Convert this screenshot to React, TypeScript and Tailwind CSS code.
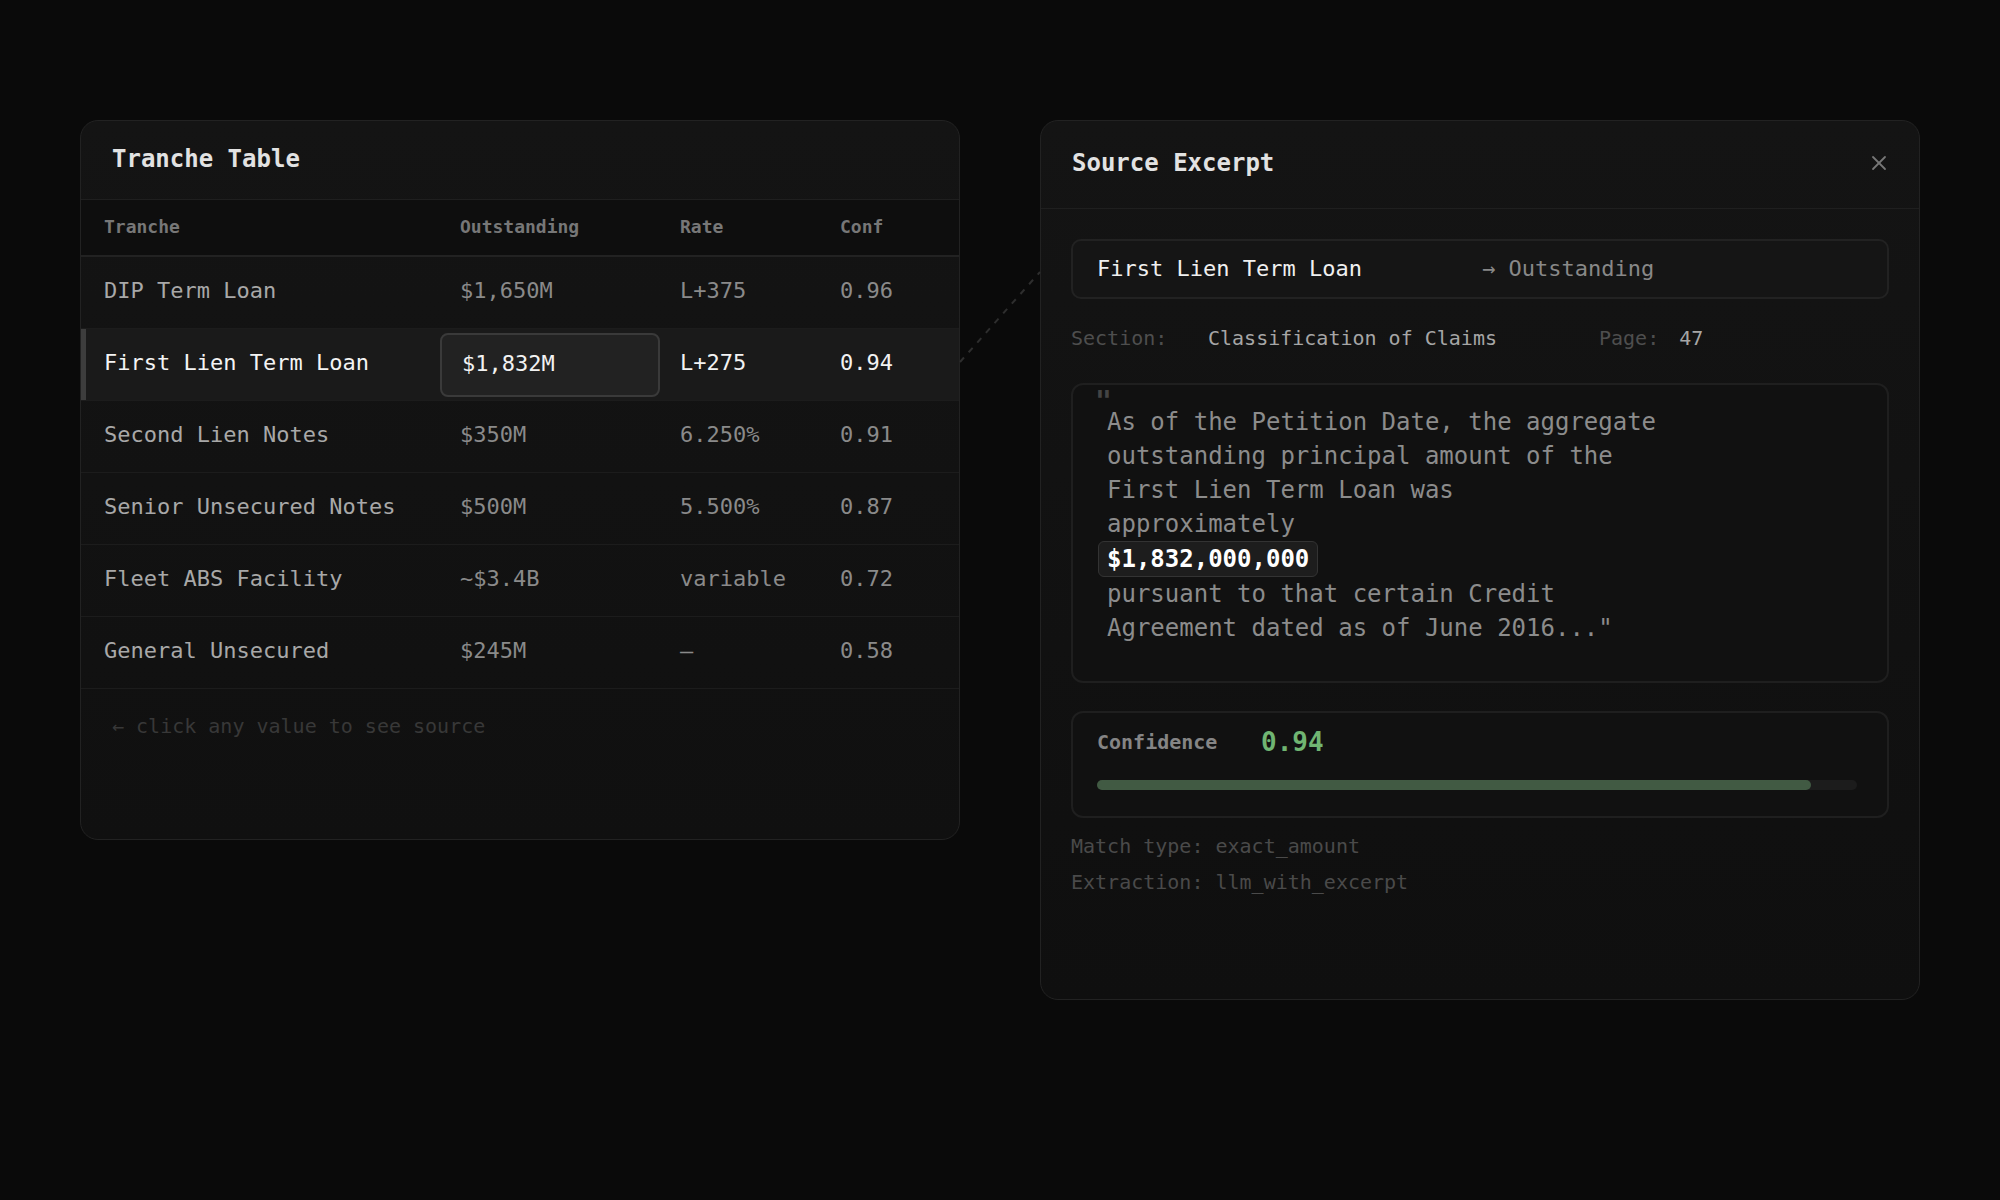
import { X } from "lucide-react";

const rows = [
  { name: "DIP Term Loan", amount: "$1,650M", rate: "L+375", conf: "0.96" },
  { name: "First Lien Term Loan", amount: "$1,832M", rate: "L+275", conf: "0.94", active: true },
  { name: "Second Lien Notes", amount: "$350M", rate: "6.250%", conf: "0.91" },
  { name: "Senior Unsecured Notes", amount: "$500M", rate: "5.500%", conf: "0.87" },
  { name: "Fleet ABS Facility", amount: "~$3.4B", rate: "variable", conf: "0.72" },
  { name: "General Unsecured", amount: "$245M", rate: "—", conf: "0.58" },
];

function TrancheTable() {
  return (
    <div className="w-[880px] h-[720px] shrink-0 rounded-[18px] border border-[#222] bg-gradient-to-b from-[#141414] to-[#101010] overflow-hidden">
      {/* Header */}
      <div className="h-[79px] pl-[31px] pb-[3px] flex items-center border-b border-[#1f1f1f]">
        <h2 className="text-[24px] font-bold text-[#e2e2e2]">Tranche Table</h2>
      </div>

      {/* Column labels */}
      <div className="h-[57px] pl-[23px] pb-[2px] flex items-center border-b-2 border-[#222] bg-[#0e0e0e] text-[18px] font-bold text-[#777]">
        <div className="w-[356px]">Tranche</div>
        <div className="w-[220px]">Outstanding</div>
        <div className="w-[160px]">Rate</div>
        <div className="flex-1">Conf</div>
      </div>

      {/* Rows */}
      {rows.map((r) => (
        <div
          key={r.name}
          className={
            r.active
              ? "relative h-[72px] pl-[23px] flex items-center border-b border-[#1c1c1c] bg-[#1a1a1a] text-[22px] text-[#f2f2f2]"
              : "relative h-[72px] pl-[23px] flex items-center border-b border-[#1c1c1c] text-[22px] text-[#8a8a8a]"
          }
        >
          {r.active && <div className="absolute left-0 top-0 bottom-0 w-[5px] bg-[#3d3d3d]" />}
          <div className={r.active ? "w-[356px] pb-[4px] text-[#f4f4f4]" : "w-[356px] pb-[4px] text-[#a8a8a8]"}>{r.name}</div>
          <div className="w-[220px]">
            {r.active ? (
              <div className="-ml-5 w-[220px] h-[64px] pl-5 pb-[3px] flex items-center rounded-[8px] border-2 border-[#3a3a3a] bg-[#222]">
                {r.amount}
              </div>
            ) : (
              <div className="pb-[4px]">{r.amount}</div>
            )}
          </div>
          <div className="w-[160px] pb-[4px]">{r.rate}</div>
          <div className="flex-1 pb-[4px]">{r.conf}</div>
        </div>
      ))}

      <div className="pl-[31px] pt-[25px] text-[20px] leading-[24px] text-[#383838]">← click any value to see source</div>
    </div>
  );
}

function SourceExcerpt() {
  return (
    <div className="w-[880px] h-[880px] shrink-0 rounded-[18px] border border-[#222] bg-gradient-to-b from-[#141414] to-[#0f0f0f] overflow-hidden">
      {/* Header */}
      <div className="h-[88px] pl-[31px] pr-[28px] pb-[4px] flex items-center justify-between border-b border-[#1f1f1f]">
        <h2 className="text-[24px] font-bold text-[#e2e2e2]">Source Excerpt</h2>
        <X className="w-[24px] h-[24px] text-[#777]" strokeWidth={1.8} />
      </div>

      <div className="px-[30px] pt-[30px]">
        {/* Field */}
        <div className="h-[60px] pl-6 pb-[2px] flex items-center rounded-[10px] border-2 border-[#222] bg-[#151515] text-[22px]">
          <span className="w-[385px] text-[#f0f0f0]">First Lien Term Loan</span>
          <span className="text-[#888]">→ Outstanding</span>
        </div>

        {/* Location */}
        <div className="mt-[25px] flex items-center text-[20px] leading-[28px]">
          <span className="w-[137px] text-[#4e4e4e]">Section:</span>
          <span className="text-[#a6a6a6]">Classification of Claims</span>
          <span className="ml-[102px] text-[#4e4e4e]">Page:</span>
          <span className="ml-5 text-[#a6a6a6]">47</span>
        </div>

        {/* Quote */}
        <div className="relative mt-[31px] h-[300px] rounded-[12px] border-2 border-[#1f1f1f] bg-[#111] pl-[34px] pt-[20px]">
          <span className="absolute left-[22px] top-[3px] text-[28px] leading-[28px] font-bold text-[#444]">"</span>
          <p className="text-[24px] leading-[34px] text-[#8c8c8c]">
            As of the Petition Date, the aggregate
            <br />
            outstanding principal amount of the
            <br />
            First Lien Term Loan was
            <br />
            approximately
            <br />
            <span className="inline-block -ml-[9px] px-2 h-[36px] leading-[34px] rounded-[6px] border border-[#333] bg-[#1d1d1d] font-bold text-white">
              $1,832,000,000
            </span>
            <br />
            pursuant to that certain Credit
            <br />
            Agreement dated as of June 2016..."
          </p>
        </div>

        {/* Confidence */}
        <div className="mt-7 h-[107px] rounded-[12px] border-2 border-[#1f1f1f] bg-[#111] px-6 pt-[14px]">
          <div className="flex items-center h-[30px]">
            <span className="w-[164px] text-[20px] font-bold text-[#858585]">Confidence</span>
            <span className="text-[26px] font-bold text-[#70b572]">0.94</span>
          </div>
          <div className="mt-[23px] w-[760px] h-[10px] rounded-full bg-[#1c1c1c]">
            <div className="h-full rounded-full bg-[#415a43]" style={{ width: "94%" }} />
          </div>
        </div>

        {/* Meta */}
        <div className="mt-[14px] flex flex-col gap-2 text-[20px] leading-[28px] text-[#4a4a4a]">
          <span>Match type: exact_amount</span>
          <span>Extraction: llm_with_excerpt</span>
        </div>
      </div>
    </div>
  );
}

export default function App() {
  return (
    <div className="relative min-h-screen w-full bg-[#0a0a0a] font-['DejaVu_Sans_Mono',monospace]">
      <div className="flex items-start gap-20 px-20 pt-[120px] pb-[200px]">
        <TrancheTable />
        <SourceExcerpt />
      </div>

      {/* connector */}
      <svg className="absolute left-0 top-0 pointer-events-none" width="2000" height="1200">
        <line x1="960" y1="362" x2="1040" y2="272" stroke="#2e2e2e" strokeWidth="2" strokeDasharray="6 7" />
      </svg>
    </div>
  );
}
